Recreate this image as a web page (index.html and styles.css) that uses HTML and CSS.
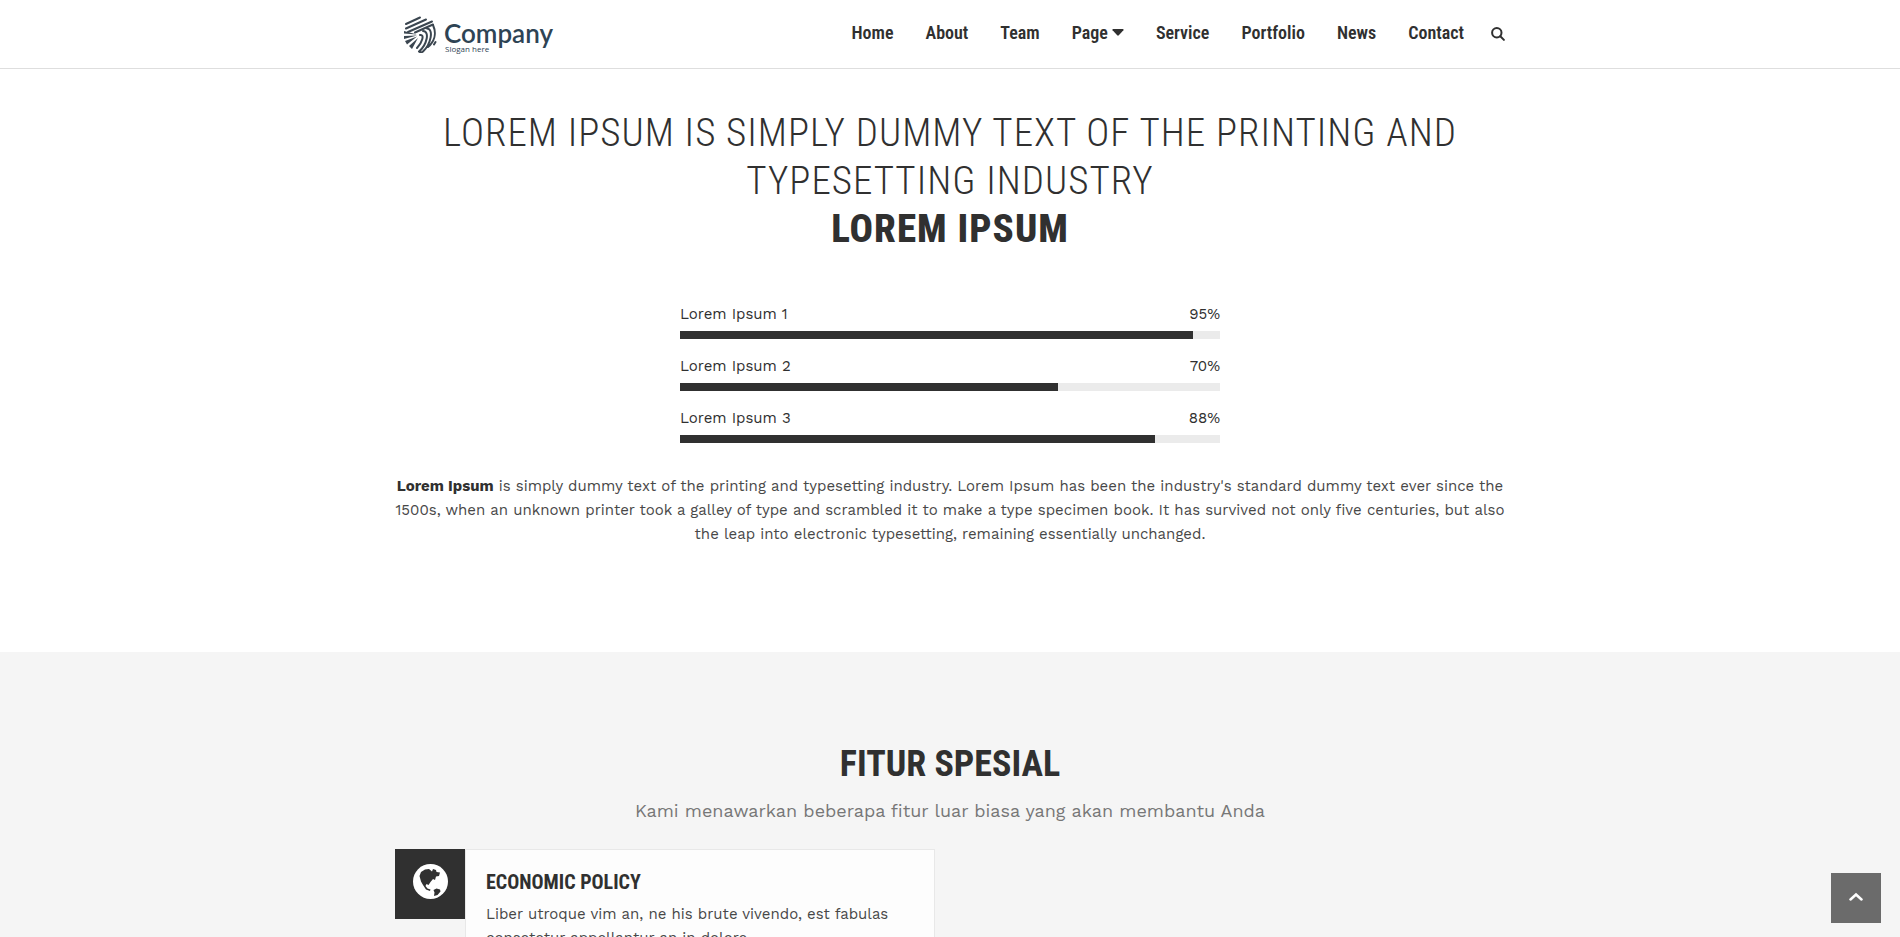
FILE: index.html
```html
<!DOCTYPE html>
<html lang="id">
<head>
<meta charset="utf-8">
<title>Company</title>
<link rel="stylesheet" href="styles.css">
</head>
<body>
<header class="site-header">
  <div class="container header-row">
    <a class="logo" href="#" aria-label="Company">
      <svg class="logo-mark" viewBox="0 0 34 38" fill="none" stroke="#3b4650" stroke-linecap="round" stroke-linejoin="round">
        <path stroke-width="2" d="M3 9 17 2.500M3 13.500 23 4.500M5 17 29 6.500M12 17.500 30 9.500"/>
        <path fill="#3b4650" stroke="none" d="M1 16 14 19.500 1 18.500zM1 21 14 20.500 1 24zM2 26 14 21.500 4 29.500zM6 31 15 23 9 34z"/>
        <path stroke-width="2" d="M17 20C22 19 19 28 14 33M20 16C27 16 24 30 16 36.500M24 13.500C31 14 28 29 20 36.500M16 36.500Q18 38 20 36.500M30 10C34 19 31 27 25 32M32.500 27 31 29.500"/>
      </svg>
      <span class="logo-text"><span class="logo-name">Company</span><span class="logo-slogan">Slogan here</span></span>
    </a>
    <nav class="main-nav">
      <a href="#">Home</a>
      <a href="#">About</a>
      <a href="#">Team</a>
      <a href="#" class="has-menu">Page<svg width="12" height="7" viewBox="0 0 12 7"><path fill="currentColor" d="M1 0h10q1 .3.4 1.200L6.800 6.300q-.8.700-1.600 0L.6 1.200Q0 .3 1 0z"/></svg></a>
      <a href="#">Service</a>
      <a href="#">Portfolio</a>
      <a href="#">News</a>
      <a href="#">Contact</a>
      <button class="search" type="button" aria-label="Search"><svg width="14" height="14" viewBox="0 0 14 14" fill="none" stroke="currentColor" stroke-width="2"><circle cx="5.800" cy="5.800" r="4.700"/><path stroke-linecap="round" d="m9.300 9.300 3.600 3.600"/></svg></button>
    </nav>
  </div>
</header>
<main>
  <section class="intro container">
    <h1 class="intro-title">Lorem Ipsum is simply dummy text of the printing and typesetting industry <strong>Lorem Ipsum</strong></h1>
    <div class="skills">
      <div class="skill"><div class="skill-label"><span>Lorem Ipsum 1</span><span>95%</span></div><div class="bar"><div class="bar-fill" style="width:95%"></div></div></div>
      <div class="skill"><div class="skill-label"><span>Lorem Ipsum 2</span><span>70%</span></div><div class="bar"><div class="bar-fill" style="width:70%"></div></div></div>
      <div class="skill"><div class="skill-label"><span>Lorem Ipsum 3</span><span>88%</span></div><div class="bar"><div class="bar-fill" style="width:88%"></div></div></div>
    </div>
    <p class="intro-text"><strong>Lorem Ipsum</strong> is simply dummy text of the printing and typesetting industry. Lorem Ipsum has been the industry's standard dummy text ever since the 1500s, when an unknown printer took a galley of type and scrambled it to make a type specimen book. It has survived not only five centuries, but also the leap into electronic typesetting, remaining essentially unchanged.</p>
  </section>
  <section class="features">
    <div class="container">
      <h2 class="features-title">Fitur Spesial</h2>
      <p class="features-lead">Kami menawarkan beberapa fitur luar biasa yang akan membantu Anda</p>
      <div class="feature-grid">
        <article class="feature">
          <div class="feature-icon"><svg width="35" height="35" viewBox="0 0 35 35"><circle cx="17.500" cy="17.500" r="17.500" fill="#fff"/><path fill="#303030" d="M8 8 12 5.500 16 5l3 2.500L20 5l3 1 .5 2 3.500.5-1 3.500-3 .5-1 3.500-2-1-2.500 3-2 3-2-1-1 2 2 2.500 3 1-.5 1.500-4-1.500-3-4.500L8 17.500 6.500 12zM20.500 26l3-1.500 3.500 1 .5 2-3 3.500-3.500 1 .5-3.500z"/></svg></div>
          <div class="feature-body">
            <h3>Economic Policy</h3>
            <p>Liber utroque vim an, ne his brute vivendo, est fabulas consetetur appellantur an in dolore.</p>
          </div>
        </article>
      </div>
    </div>
  </section>
</main>
<button class="to-top" type="button" aria-label="Back to top"><svg width="14" height="9" viewBox="0 0 14 9" fill="none" stroke="currentColor" stroke-width="2.500" stroke-linecap="round"><path d="m1.500 7.500 5.500-5 5.500 5"/></svg></button>
</body>
</html>
```
FILE: styles.css
```css
* { box-sizing: border-box; }
body {
  margin: 0;
  color: #303030;
  background: #fff;
  font: 15px/24px "Work Sans", Inter, sans-serif;
}
h1, h2, h3, .main-nav { font-family: "Roboto Condensed", Roboto, sans-serif; }
h1, h2, h3, p { margin: 0; }
.container { max-width: 1140px; margin: 0 auto; padding: 0 15px; }
.site-header { border-bottom: 1px solid #dedede; }
.header-row { display: flex; align-items: center; justify-content: space-between; height: 68px; }
.logo { display: flex; gap: 7px; margin-left: 8px; color: #2e4354; text-decoration: none; }
.logo-mark { width: 34px; height: 38px; }
.logo-text { display: flex; flex-direction: column; padding-top: 6px; }
.logo-name { font: 600 26px/24px Lato, sans-serif; }
.logo-slogan { padding-left: 1px; font: 8px/8px "Open Sans", sans-serif; }
.main-nav { display: flex; align-items: center; gap: 32px; padding-bottom: 2px; font-size: 18px; font-weight: 600; }
.main-nav a { color: inherit; text-decoration: none; }
.has-menu svg { margin-left: 4px; vertical-align: 3px; }
.search { display: flex; margin: 2px 0 0 -5px; padding: 0; border: 0; background: none; color: inherit; }
.intro { padding-top: 40px; padding-bottom: 106px; text-align: center; }
.intro-title { font-size: 39px; line-height: 48px; font-weight: 300; text-transform: uppercase; letter-spacing: 1px; }
.intro-title strong { display: block; font-weight: 800; }
.skills { display: grid; gap: 15px; max-width: 540px; margin: 49px auto 31px; }
.skill-label { display: flex; justify-content: space-between; margin-bottom: 5px; }
.bar { height: 8px; background: #ebebeb; }
.bar-fill { height: 100%; background: #303030; }
.intro-text, .feature-body p { color: #484848; }
.intro-text strong { color: #303030; }
.features { padding: 91px 0; background: #f5f5f5; text-align: center; }
.features-title { font-size: 36px; line-height: 43px; text-transform: uppercase; }
.features-lead { margin-top: 11px; font-size: 18px; line-height: 28px; color: #777; }
.feature-grid { display: grid; grid-template-columns: 1fr 1fr; gap: 30px; margin-top: 24px; text-align: left; }
.feature { display: flex; align-items: flex-start; }
.feature-icon { display: flex; flex: none; align-items: center; justify-content: center; width: 70px; height: 70px; padding-bottom: 5px; background: #303030; }
.feature-body { flex: 1; padding: 20px; border: 1px solid #e8e8e8; background: #fdfdfd; }
.feature-body h3 { margin-bottom: 8px; font-size: 20px; line-height: 24px; text-transform: uppercase; }
.to-top { position: fixed; right: 19px; bottom: 14px; display: flex; align-items: center; justify-content: center; width: 50px; height: 50px; padding: 0 0 4px; border: 0; background: #6b6b6b; color: #fff; }
```
